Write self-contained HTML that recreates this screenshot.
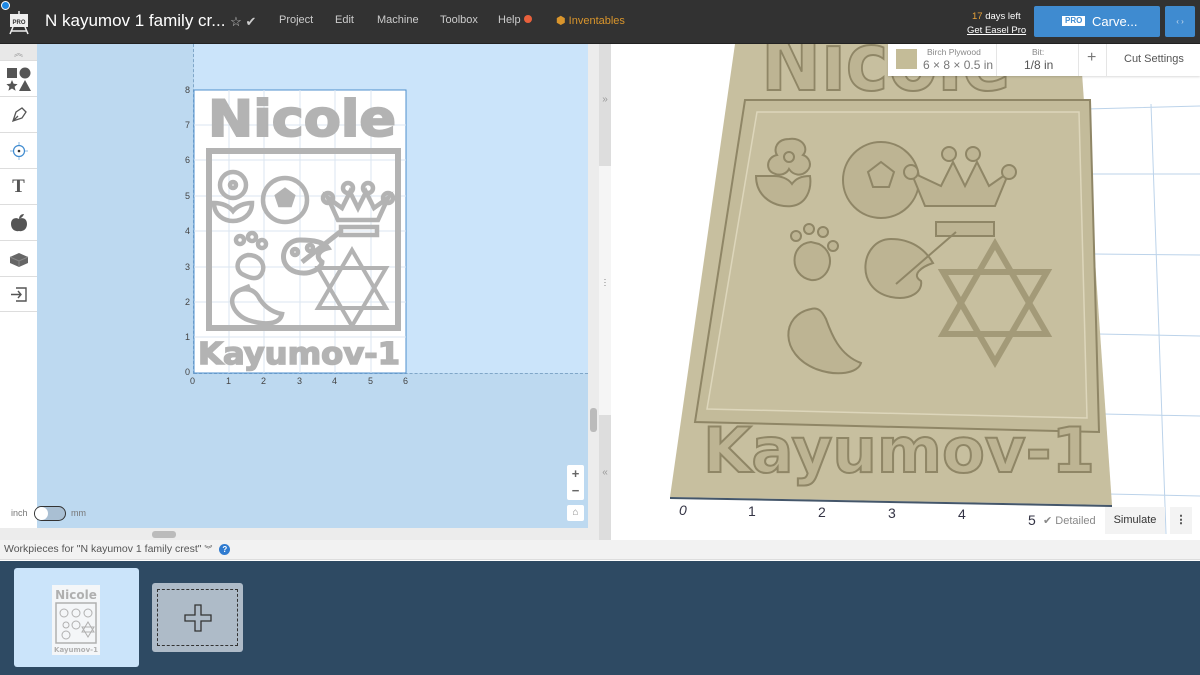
<!DOCTYPE html>
<html><head><meta charset="utf-8"><style>
*{margin:0;padding:0;box-sizing:border-box}
body{width:1200px;height:675px;overflow:hidden;font-family:"Liberation Sans",sans-serif;background:#fff;position:relative}
.abs{position:absolute}
.top{left:0;top:0;width:1200px;height:44px;background:#323232;border-bottom:1px solid #222}
.menu{top:14px;font-size:11px;color:#ccc}
.tb{left:0;width:37px;background:#fff;border-bottom:1px solid #ddd;display:flex;align-items:center;justify-content:center}
</style></head><body>
<div class="abs top">
  <div class="abs" style="left:1px;top:1px;width:9px;height:9px;border-radius:50%;background:#1e88e5;border:1px solid #fff"></div>
  <svg class="abs" style="left:8px;top:11px" width="22" height="24" viewBox="0 0 22 24"><rect x="2" y="3" width="18" height="13" fill="#eee"/><text x="11" y="13" font-size="6" text-anchor="middle" fill="#333" font-family="Liberation Sans" font-weight="bold">PRO</text><path d="M11 0v3M5 16l-3 7M17 16l3 7M3 20h16" stroke="#eee" stroke-width="1.5"/></svg>
  <div class="abs" style="left:45px;top:11px;font-size:17px;color:#fff">N kayumov 1 family cr... <span style="font-size:13px;color:#ccc">☆ ✔</span></div>
  <div class="abs menu" style="left:279px">Project</div>
  <div class="abs menu" style="left:335px">Edit</div>
  <div class="abs menu" style="left:377px">Machine</div>
  <div class="abs menu" style="left:440px">Toolbox</div>
  <div class="abs menu" style="left:498px">Help <span style="display:inline-block;width:8px;height:8px;border-radius:50%;background:#e8603c"></span></div>
  <div class="abs menu" style="left:556px;color:#d9952c">⬢ Inventables</div>
  <div class="abs" style="left:972px;top:11px;font-size:9.5px;color:#fff"><span style="color:#e8a33a">17</span> days left</div>
  <div class="abs" style="left:967px;top:25px;font-size:9.5px;color:#fff;text-decoration:underline">Get Easel Pro</div>
  <div class="abs" style="left:1034px;top:6px;width:126px;height:31px;background:#3f8bd0;border-radius:2px;color:#fff;font-size:13px;line-height:31px"><span style="position:absolute;left:28px;top:10px;background:#fff;color:#3f8bd0;font-size:8px;line-height:10px;padding:0 3px;font-weight:bold">PRO</span><span style="position:absolute;left:58px">Carve...</span></div>
  <div class="abs" style="left:1165px;top:6px;width:30px;height:31px;background:#3f8bd0;border-radius:2px;color:#cde;font-size:8px;text-align:center;line-height:31px">‹ ›</div>
</div>
<!-- left canvas -->
<div class="abs" style="left:37px;top:44px;width:551px;height:484px;background:#bdd9f0"></div>
<div class="abs" style="left:194px;top:44px;width:394px;height:329px;background:#cbe4fa"></div>
<div class="abs" style="left:193px;top:44px;height:330px;border-left:1px dashed #7fa6c8"></div>
<div class="abs" style="left:194px;top:373px;width:394px;border-top:1px dashed #7fa6c8"></div>
<div class="abs" style="left:588px;top:44px;width:11px;height:484px;background:#ececec"></div>
<div class="abs" style="left:590px;top:408px;width:7px;height:24px;background:#bbb;border-radius:3px"></div>
<div class="abs" style="left:0;top:528px;width:599px;height:12px;background:#ececec"></div>
<div class="abs" style="left:152px;top:531px;width:24px;height:7px;background:#bbb;border-radius:3px"></div>
<div class="abs" style="left:599px;top:44px;width:12px;height:122px;background:#ddd;color:#999;font-size:10px;text-align:center;padding-top:50px">»</div>
<div class="abs" style="left:599px;top:166px;width:12px;height:249px;background:#f5f5f5;color:#777;font-size:9px;text-align:center;padding-top:112px;line-height:3px">·<br>·<br>·</div>
<div class="abs" style="left:599px;top:415px;width:12px;height:125px;background:#ddd;color:#999;font-size:10px;text-align:center;padding-top:52px">«</div>
<!-- toolbar -->
<div class="abs tb" style="top:44px;height:17px;background:#e8e8e8;color:#999;font-size:9px">︽</div>
<div class="abs tb" style="top:61px;height:36px"><svg width="26" height="26"><rect x="1" y="2" width="10" height="10" fill="#555"/><circle cx="19" cy="7" r="5.5" fill="#555"/><path d="M6 14l1.6 3.8 4 .3-3 2.6 1 4-3.6-2.2-3.6 2.2 1-4-3-2.6 4-.3z" fill="#555"/><path d="M19 14l6 11h-12z" fill="#555"/></svg></div>
<div class="abs tb" style="top:97px;height:36px"><svg width="18" height="18"><path d="M3 15l3-9 6-4 4 4-4 6-9 3zM3 15l5-5" stroke="#555" fill="none" stroke-width="1.3"/></svg></div>
<div class="abs tb" style="top:133px;height:36px"><svg width="20" height="20"><circle cx="10" cy="10" r="5.5" stroke="#3f8bd0" fill="none" stroke-width="1.2"/><circle cx="10" cy="10" r="1.3" fill="#333"/><path d="M10 1v3M10 16v3M1 10h3M16 10h3" stroke="#8bb8e0"/></svg></div>
<div class="abs tb" style="top:169px;height:36px;font-family:'Liberation Serif',serif;font-size:19px;font-weight:bold;color:#555">T</div>
<div class="abs tb" style="top:205px;height:36px"><svg width="20" height="20"><path d="M10 6c-3-2-8-1-8 5 0 5 4 8 8 7 4 1 8-2 8-7 0-6-5-7-8-5z" fill="#555"/><path d="M10 6c0-3 2-5 5-5-1 3-3 4-5 5" fill="#555"/></svg></div>
<div class="abs tb" style="top:241px;height:36px"><svg width="20" height="16"><path d="M1 6l9-4 9 4v6l-9 4-9-4z" fill="#666"/><path d="M1 6l9 4 9-4M10 10v6" stroke="#888" fill="none"/></svg></div>
<div class="abs tb" style="top:277px;height:35px"><svg width="18" height="18"><path d="M6 3h10v13H6M1 9.5h10M8 6l3 3.5-3 3.5" stroke="#555" fill="none" stroke-width="1.4"/></svg></div>
<!-- design board -->
<svg class="abs" style="left:170px;top:80px" width="250" height="310" viewBox="0 0 250 310">
 <rect x="24" y="10" width="212" height="283" fill="#fff" stroke="#4f8fcc" stroke-width="1"/>
 <g stroke="#dbe6f0" stroke-width="1">
  <path d="M59 10v283M94 10v283M130 10v283M165 10v283M201 10v283M24 45h212M24 80h212M24 116h212M24 151h212M24 187h212M24 222h212M24 257h212"/>
 </g>
 <g font-size="9" fill="#444" font-family="Liberation Sans">
  <text x="15" y="13">8</text><text x="15" y="48">7</text><text x="15" y="83">6</text><text x="15" y="119">5</text><text x="15" y="154">4</text><text x="15" y="190">3</text><text x="15" y="225">2</text><text x="15" y="260">1</text><text x="15" y="295">0</text>
  <text x="20" y="304">0</text><text x="56" y="304">1</text><text x="91" y="304">2</text><text x="127" y="304">3</text><text x="162" y="304">4</text><text x="198" y="304">5</text><text x="233" y="304">6</text>
 </g>
 <text x="38" y="56" font-size="50" font-weight="bold" fill="#b3b3b3" font-family="DejaVu Sans" textLength="188" lengthAdjust="spacingAndGlyphs" stroke="#b3b3b3" stroke-width="2">Nicole</text>
 <rect x="39" y="71" width="189" height="177" fill="none" stroke="#b3b3b3" stroke-width="6"/>
 <g fill="none" stroke="#b3b3b3" stroke-width="4.5">
  <circle cx="115" cy="120" r="22"/>
  <path d="M115 110l8 6-3 9h-10l-3-9z" fill="#b3b3b3"/>
  <circle cx="63" cy="105" r="13"/><circle cx="63" cy="105" r="3"/>
  <path d="M44 123c0 12 10 18 19 18s19-6 19-18c-8 0-15 3-19 8-4-5-11-8-19-8z"/>
  <path d="M158 118l10 22h40l10-22-14 10-8-16-8 16-8-16-8 16z"/><circle cx="158" cy="118" r="5"/><circle cx="218" cy="118" r="5"/><circle cx="178" cy="108" r="5"/><circle cx="198" cy="108" r="5"/>
  <rect x="171" y="147" width="36" height="8"/>
  <path d="M182 170l34 58h-68zM182 246l34-58h-68z" stroke-width="4"/>
  <path d="M78 175c-12 2-14 16 -4 20 6 3 14 6 18 -2 4-8-2-18-14-18z"/><circle cx="70" cy="160" r="4"/><circle cx="82" cy="157" r="4"/><circle cx="92" cy="164" r="4"/>
  <path d="M130 160c-18 0-24 26-4 32 14 4 26-4 26-10-8-6-2-12 6-14-4-6-14-8-28-8zM132 182l38-30" stroke-width="5"/>
  <circle cx="125" cy="172" r="3"/><circle cx="140" cy="168" r="3"/>
  <path d="M70 210c-14 6-8 24 8 30 18 6 32 4 34 -6-12-2-20-10-24-18-4-6-10-8-18-6z"/><path d="M70 210l10-4"/>
 </g>
 <text x="28" y="284" font-size="30" font-weight="bold" fill="#b3b3b3" font-family="DejaVu Sans" textLength="202" lengthAdjust="spacingAndGlyphs" stroke="#b3b3b3" stroke-width="1.5">Kayumov-1</text>
</svg>
<div class="abs" style="left:567px;top:465px;width:17px;height:35px;background:#fff;border-radius:2px;color:#666;font-size:13px;text-align:center;line-height:17px;font-weight:bold">+<br>−</div>
<div class="abs" style="left:567px;top:505px;width:17px;height:16px;background:#fff;border-radius:2px;color:#888;font-size:10px;text-align:center;line-height:16px">⌂</div>
<div class="abs" style="left:11px;top:508px;font-size:9px;color:#777">inch</div>
<div class="abs" style="left:34px;top:506px;width:32px;height:15px;border-radius:8px;background:#a9bfd3;border:1px solid #333"><div style="width:13px;height:13px;border-radius:50%;background:#fff"></div></div>
<div class="abs" style="left:71px;top:508px;font-size:9px;color:#777">mm</div>
<!-- 3D view -->
<svg class="abs" style="left:611px;top:44px" width="589" height="496" viewBox="0 0 589 496">
 <rect width="589" height="496" fill="#fff"/>
 <g stroke="#bcd3ea" stroke-width="1" fill="none">
  <path d="M540 60l15 430M475 65l114-3M478 130l111 0M482 210l107 1M487 290l102 2M492 370l97 2M497 450l92 2"/>
 </g>
 <path d="M124 0h345l32 461-442-8z" fill="#c7bf9f"/>
 <path d="M59 454l442 8" stroke="#44566a" stroke-width="2"/>
 <path d="M134 56h345l9 332-404-10z" fill="#c3bb9a" stroke="#8f8666" stroke-width="2"/>
 <path d="M146 68h322l8 306-380-9z" fill="#c7bf9f" stroke="#ddd6bb" stroke-width="1.5"/>
 <text x="150" y="46" font-size="80" font-weight="bold" fill="#bdb493" stroke="#8f8666" stroke-width="2" font-family="DejaVu Sans" textLength="250" lengthAdjust="spacingAndGlyphs">Nicole</text>
 <text x="92" y="428" font-size="62" font-weight="bold" fill="#bdb493" stroke="#8f8666" stroke-width="2" font-family="DejaVu Sans" textLength="392" lengthAdjust="spacingAndGlyphs">Kayumov-1</text>
 <g fill="#bdb493" stroke="#8f8666" stroke-width="2">
  <circle cx="270" cy="136" r="38"/>
  <path d="M270 118l13 10-5 15h-16l-5-15z" fill="none"/>
  <path d="M178 95c-12 0-16 10-12 16-10 2-12 14-4 18 8 4 14 0 16-4 4 6 12 8 18 2 6-6 2-14-4-16 6-6 0-18-14-16z"/><circle cx="178" cy="113" r="5"/>
  <path d="M145 132c0 22 20 32 36 30 14-2 20-16 18-30-8 0-14 2-18 8-4-6-12-8-18-8z"/>
  <path d="M300 128l14 34h70l14-34-20 14-12-24-12 24-12-24-12 24z"/><circle cx="300" cy="128" r="7"/><circle cx="398" cy="128" r="7"/><circle cx="338" cy="110" r="7"/><circle cx="362" cy="110" r="7"/>
  <rect x="325" y="178" width="58" height="14"/>
  <path d="M384 200l52 90h-104zM384 318l52-90h-104z" fill="none" stroke-width="6" stroke="#a39a78"/>
  <path d="M200 198c-22 2-22 34 0 38 18 2 28-26 8-36z"/><circle cx="185" cy="192" r="5"/><circle cx="198" cy="185" r="5"/><circle cx="212" cy="188" r="5"/><circle cx="222" cy="202" r="5"/>
  <path d="M280 195c-30 0-38 50 0 58 20 4 32-6 30-16-10-6 0-14 12-18-8-14-22-24-42-24zM285 240l60-52" stroke-width="2"/>
  <path d="M200 265c-30 6-32 45 5 60 22 8 42 4 45 -6-22-8-30-30-35-44-4-8-8-12-15-10z"/>
 </g>
 <g font-size="14" fill="#334" font-family="Liberation Sans">
  <text x="68" y="471" font-style="italic">0</text><text x="137" y="472">1</text><text x="207" y="473">2</text><text x="277" y="474">3</text><text x="347" y="475">4</text><text x="417" y="481">5</text>
 </g>
 <text x="432" y="480" font-size="11" fill="#888" font-family="Liberation Sans">✔ Detailed</text>
</svg>
<div class="abs" style="left:888px;top:44px;width:312px;height:32px;background:#fff;box-shadow:0 1px 2px rgba(0,0,0,.15)">
 <div class="abs" style="left:8px;top:5px;width:21px;height:20px;background:#c4bc98"></div>
 <div class="abs" style="left:39px;top:3px;font-size:8.5px;color:#888">Birch Plywood</div>
 <div class="abs" style="left:35px;top:14px;font-size:12px;color:#777">6 × 8 × 0.5 in</div>
 <div class="abs" style="left:108px;top:0;width:1px;height:32px;background:#e5e5e5"></div>
 <div class="abs" style="left:144px;top:3px;font-size:8.5px;color:#888">Bit:</div>
 <div class="abs" style="left:136px;top:14px;font-size:12px;color:#555">1/8 in</div>
 <div class="abs" style="left:190px;top:0;width:1px;height:32px;background:#e5e5e5"></div>
 <div class="abs" style="left:199px;top:5px;font-size:16px;color:#777">+</div>
 <div class="abs" style="left:218px;top:0;width:1px;height:32px;background:#e5e5e5"></div>
 <div class="abs" style="left:236px;top:9px;font-size:11px;color:#555">Cut Settings</div>
</div>
<div class="abs" style="left:1105px;top:507px;width:60px;height:27px;background:#f3f3f3;font-size:11px;color:#333;text-align:center;line-height:27px">Simulate</div>
<div class="abs" style="left:1170px;top:507px;width:22px;height:27px;background:#f3f3f3;font-size:11px;color:#333;text-align:center;line-height:27px;font-weight:bold">⋮</div>
<!-- bottom -->
<div class="abs" style="left:0;top:540px;width:1200px;height:20px;background:#f2f2f2;border-bottom:1px solid #ddd"></div>
<div class="abs" style="left:4px;top:543px;font-size:10.5px;color:#555">Workpieces for "N kayumov 1 family crest" <span style="font-size:8px">︾</span> <span style="display:inline-block;width:11px;height:11px;border-radius:50%;background:#2f7bd0;color:#fff;font-size:8px;text-align:center;line-height:11px;font-weight:bold;margin-left:4px">?</span></div>
<div class="abs" style="left:0;top:561px;width:1200px;height:114px;background:#2e4a63"></div>
<div class="abs" style="left:14px;top:568px;width:125px;height:99px;background:#cbe4fa;border-radius:3px"></div>
<svg class="abs" style="left:52px;top:585px" width="48" height="70" viewBox="0 0 48 70">
 <rect width="48" height="70" fill="#f4f6f8"/>
 <text x="24" y="14" font-size="12" font-weight="bold" fill="#b0b0b0" text-anchor="middle" font-family="DejaVu Sans">Nicole</text>
 <rect x="4" y="18" width="40" height="40" fill="none" stroke="#b0b0b0" stroke-width="1.5"/>
 <g fill="none" stroke="#b0b0b0"><circle cx="12" cy="28" r="4"/><circle cx="24" cy="28" r="4"/><circle cx="36" cy="28" r="4"/><circle cx="14" cy="40" r="3"/><circle cx="24" cy="40" r="4"/><path d="M36 37l6 10h-12zM36 52l6-10h-12z"/><circle cx="14" cy="50" r="4"/></g>
 <text x="24" y="67" font-size="7" font-weight="bold" fill="#b0b0b0" text-anchor="middle" font-family="DejaVu Sans">Kayumov-1</text>
</svg>
<div class="abs" style="left:152px;top:583px;width:91px;height:69px;background:#aebbc8;border-radius:3px">
 <div class="abs" style="left:5px;top:6px;width:81px;height:57px;border:1px dashed #333"></div>
 <svg class="abs" style="left:32px;top:21px" width="28" height="28"><path d="M11 1h6v10h10v6H17v10h-6V17H1v-6h10z" fill="none" stroke="#333" stroke-width="1.3"/></svg>
</div>
</body></html>
